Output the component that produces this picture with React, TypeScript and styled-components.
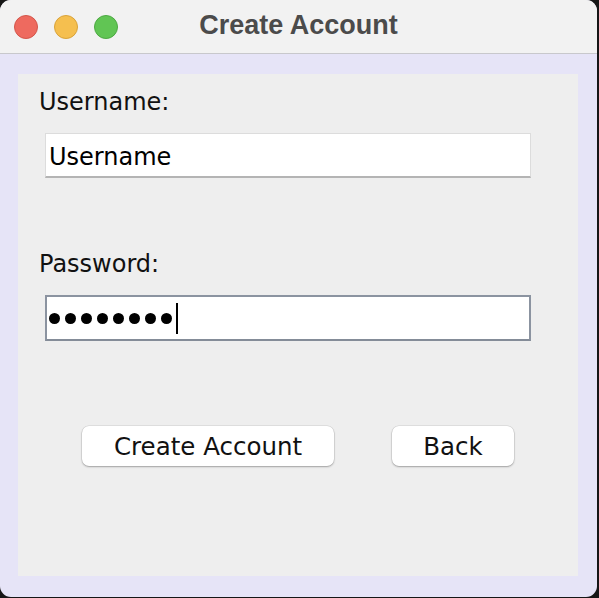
import styled, { createGlobalStyle } from "styled-components";

const GlobalStyle = createGlobalStyle`
  html, body {
    margin: 0;
    padding: 0;
    background: #161616;
  }
  #root {
    width: 599px;
    height: 598px;
  }
`;

const Window = styled.div`
  width: 597px;
  height: 597px;
  border-radius: 11px;
  overflow: hidden;
  background: #e6e4f7;
  display: flex;
  flex-direction: column;
  font-family: "DejaVu Sans", "Liberation Sans", sans-serif;
`;

const TitleBar = styled.div`
  height: 53px;
  flex-shrink: 0;
  background: #f2f2f2;
  border-bottom: 1px solid #c8c8cc;
  display: grid;
  grid-template-columns: 1fr auto 1fr;
  align-items: center;
`;

const Lights = styled.div`
  display: flex;
  gap: 16px;
  padding-left: 14px;
`;

const Light = styled.span<{ $color: string; $edge: string }>`
  width: 24px;
  height: 24px;
  border-radius: 50%;
  box-sizing: border-box;
  background: ${(p) => p.$color};
  border: 1px solid ${(p) => p.$edge};
`;

const Title = styled.h1`
  margin: 0 0 4px;
  font-family: "Liberation Sans", Arial, sans-serif;
  font-size: 27px;
  font-weight: 700;
  color: #4b4b4b;
  line-height: 30px;
`;

const Content = styled.div`
  flex: 1;
  display: flex;
  padding: 20px 19px 21px 18px;
`;

const Panel = styled.div`
  flex: 1;
  background: #eeeeee;
  display: flex;
  flex-direction: column;
  padding-top: 14px;
`;

const Label = styled.label<{ $gap?: number }>`
  display: block;
  margin-top: ${(p) => p.$gap ?? 0}px;
  padding-left: 21px;
  font-size: 24px;
  line-height: 28px;
  color: #111;
`;

const Field = styled.div<{ $focused?: boolean }>`
  box-sizing: border-box;
  margin: 17px 0 0 27px;
  width: 486px;
  height: ${(p) => (p.$focused ? 46 : 45)}px;
  background: #fff;
  display: flex;
  align-items: center;
  font-size: 24px;
  color: #000;
  border: ${(p) =>
    p.$focused ? "2px solid #8b93a0" : "1px solid #dcdcdc"};
  border-bottom: ${(p) =>
    p.$focused ? "2px solid #848c98" : "2px solid #b4b4b4"};
  padding-left: ${(p) => (p.$focused ? 2 : 3)}px;
  padding-top: ${(p) => (p.$focused ? 0 : 3)}px;
`;

const Dots = styled.div`
  display: flex;
  gap: 5px;
  align-items: center;
`;

const Dot = styled.span`
  width: 11px;
  height: 11px;
  border-radius: 50%;
  background: #000;
`;

const Caret = styled.span`
  width: 2px;
  height: 31px;
  margin-left: 4px;
  background: #000;
`;

const ButtonRow = styled.div`
  display: flex;
  gap: 58px;
  margin-top: 85px;
  padding-left: 64px;
`;

const Button = styled.button<{ $width: number }>`
  width: ${(p) => p.$width}px;
  height: 40px;
  border: none;
  border-radius: 7px;
  background: #fff;
  box-shadow: 0 0 0 0.5px rgba(0, 0, 0, 0.12), 0 1px 2px rgba(0, 0, 0, 0.28);
  font-family: "DejaVu Sans", sans-serif;
  font-size: 24.5px;
  color: #111;
  padding: 0;
  cursor: pointer;
`;

export default function App() {
  return (
    <>
      <GlobalStyle />
      <Window>
        <TitleBar>
          <Lights>
            <Light $color="#ee6a5f" $edge="#d4564b" />
            <Light $color="#f5bf4f" $edge="#d9a33a" />
            <Light $color="#61c554" $edge="#4da943" />
          </Lights>
          <Title>Create Account</Title>
          <div />
        </TitleBar>
        <Content>
          <Panel>
            <Label>Username:</Label>
            <Field>Username</Field>
            <Label $gap={72}>Password:</Label>
            <Field $focused>
              <Dots>
                {Array.from({ length: 8 }).map((_, i) => (
                  <Dot key={i} />
                ))}
              </Dots>
              <Caret />
            </Field>
            <ButtonRow>
              <Button $width={252}>Create Account</Button>
              <Button $width={122}>Back</Button>
            </ButtonRow>
          </Panel>
        </Content>
      </Window>
    </>
  );
}
